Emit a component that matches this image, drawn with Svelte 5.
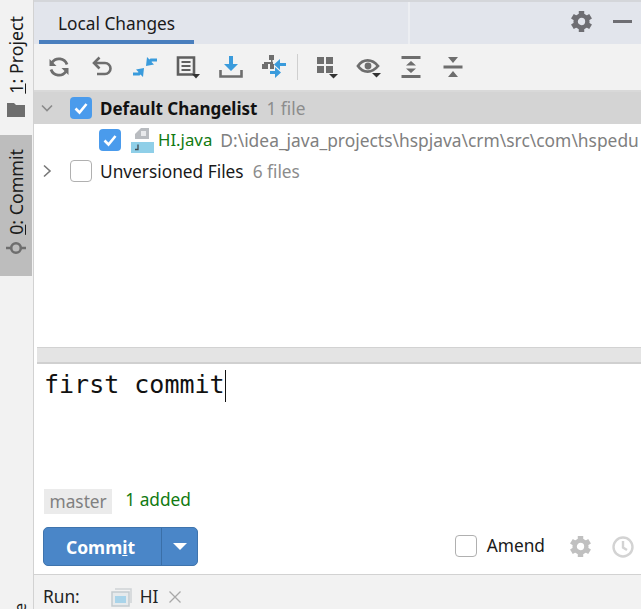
<script>
  const files = [{ name: 'Unversioned Files', count: '6 files' }];
  const teeth = [0, 60, 120, 180, 240, 300];
</script>

{#snippet gear(size, color)}
  <svg width={size} height={size} viewBox="0 0 20 20">
    <circle cx="10" cy="10" r="5.600" fill="none" stroke={color} stroke-width="4.200"/>
    {#each teeth as t}
      <path fill={color} d="M7.400 0h5.200v4H7.400z" transform="rotate({t} 10 10)"/>
    {/each}
  </svg>
{/snippet}

{#snippet check(on, size)}
  <span class="check" class:on style="width:{size}px;height:{size}px">
    {#if on}
      <svg viewBox="0 0 22 22" width={size} height={size}><path d="M5.500 11.500l4 4 7-8.500" fill="none" stroke="#fff" stroke-width="2.600"/></svg>
    {/if}
  </span>
{/snippet}

<div class="window">
  <aside class="stripe">
    <div class="side-tab project">
      <span class="side-label"><u>1</u>: Project</span>
      <svg width="18" height="14" viewBox="0 0 18 14"><path fill="#6e6e6e" d="M0 0h7l2 2h9v12H0z"/></svg>
    </div>
    <div class="side-tab commit">
      <span class="side-label"><u>0</u>: Commit</span>
      <svg width="20" height="14" viewBox="0 0 20 14">
        <path d="M0 7h20" stroke="#6e6e6e" stroke-width="2.500"/>
        <circle cx="10" cy="7" r="4.800" fill="#bdbdbd" stroke="#6e6e6e" stroke-width="2.600"/>
      </svg>
    </div>
    <span class="cut-label">e</span>
  </aside>

  <main class="main">
    <header class="tabs">
      <div class="tab">Local Changes</div>
      <span class="tab-line"></span>
      <div class="tab-actions">
        {@render gear(21, '#6e6e73')}
        <span class="minimize"></span>
      </div>
    </header>

    <div class="toolbar">
      <span class="cell">
        <svg width="24" height="24" viewBox="0 0 24 24" fill="none" stroke="#6e6e6e" stroke-width="2.800">
          <path d="M20 9.500A8.500 8.500 0 0 0 5 7.500"/><path d="M4 14.500A8.500 8.500 0 0 0 19 16.500"/>
          <path d="M2.500 4v7h7z" fill="#6e6e6e" stroke="none"/><path d="M21.500 20v-7h-7z" fill="#6e6e6e" stroke="none"/>
        </svg>
      </span>
      <span class="cell">
        <svg width="24" height="24" viewBox="0 0 24 24" fill="none" stroke="#6e6e6e" stroke-width="2.600">
          <path d="M4 8h11a5.500 5.500 0 0 1 0 11H7"/><path d="M9.500 2.500L4 8l5.500 5.500"/>
        </svg>
      </span>
      <span class="cell">
        <svg width="24" height="24" viewBox="0 0 24 24">
          <path fill="#3a9bdc" d="M13 11l1-9 2.500 2.500 1-1H24v3h-5l-.5.500 2.500 2.500z"/>
          <path fill="#3a9bdc" d="M11 13l-1 9-2.500-2.500-1 1H0v-3h5l.5-.5L3 14.500z"/>
        </svg>
      </span>
      <span class="cell">
        <svg width="26" height="26" viewBox="0 0 26 26" fill="none" stroke="#5f5f5f">
          <path stroke-width="2.600" d="M3 3.500h16v17H3z"/>
          <path stroke-width="2" d="M6.500 8h9M6.500 12h9M6.500 16h9"/>
          <path fill="#333" stroke="none" d="M17 20h8l-4 4.500z"/>
        </svg>
      </span>
      <span class="cell">
        <svg width="24" height="24" viewBox="0 0 24 24">
          <path fill="#3a9bdc" d="M10 1h4v8h5l-7 7-7-7h5z"/>
          <path fill="none" stroke="#6e6e6e" stroke-width="2.600" d="M1.500 15v6.500h21V15"/>
        </svg>
      </span>
      <span class="cell">
        <svg width="26" height="26" viewBox="0 0 26 26">
          <path fill="#6e6e6e" d="M8 1h5v5H8zM1 10h6v5H1zM9 10h4v5H9zM10 6h1.500v4H10zM3 8h9v2H3z"/>
          <path fill="#3a9bdc" d="M19 5v4h6v3h-6v4l-6-5.500zM14 13v4H9v3h5v4l6-5.500z"/>
        </svg>
      </span>
      <span class="tool-sep"></span>
      <span class="cell narrow">
        <svg width="26" height="26" viewBox="0 0 26 26">
          <path fill="#6e6e6e" d="M3 3h7v7H3zM12 3h7v7h-7zM3 12h7v7H3zM12 12h7v7h-7z"/>
          <path fill="#333" d="M15 20h9l-4.500 4.500z"/>
        </svg>
      </span>
      <span class="cell narrow">
        <svg width="26" height="26" viewBox="0 0 26 26">
          <path fill="none" stroke="#6e6e6e" stroke-width="2.800" d="M2 12c5-7.500 14-7.500 20 0-6 7.500-15 7.500-20 0z"/>
          <circle cx="12" cy="12" r="3.400" fill="#6e6e6e"/>
          <path fill="#333" d="M16 19h9l-4.500 4.500z"/>
        </svg>
      </span>
      <span class="cell narrow">
        <svg width="22" height="24" viewBox="0 0 22 24">
          <path fill="#6e6e6e" d="M1.500 1h19v3h-19zM1.500 20h19v3h-19zM11 6l5 4.500H6zM11 18l-5-4.500h10z"/>
        </svg>
      </span>
      <span class="cell narrow">
        <svg width="22" height="24" viewBox="0 0 22 24">
          <path fill="#6e6e6e" d="M1.500 10.500h19v3h-19zM6 2h10l-5 6zM11 16l5 6H6z"/>
        </svg>
      </span>
    </div>

    <section class="tree">
      <div class="row selected">
        <svg class="chevron" width="12" height="12" viewBox="0 0 12 12"><path d="M1 3.500l5 5 5-5" fill="none" stroke="#8a8a8a" stroke-width="1.600"/></svg>
        {@render check(true, 22)}
        <span class="name bold">Default Changelist</span>
        <span class="muted">1 file</span>
      </div>
      <div class="row file">
        {@render check(true, 22)}
        <svg class="file-icon" width="24" height="26" viewBox="0 0 24 26">
          <path fill="#b9bcc0" d="M5 12V7l6-6h8v11z"/>
          <path fill="#e9eaec" d="M11 4h5v5h-5z"/>
          <path fill="#8fcfe8" d="M1 15h23v11H1z"/>
          <path fill="none" stroke="#3f4a50" stroke-width="1.300" d="M8 17.500v5H5"/>
        </svg>
        <span class="name file-name">HI.java</span>
        <span class="path">D:\idea_java_projects\hspjava\crm\src\com\hspedu</span>
      </div>
      {#each files as f}
        <div class="row">
          <svg class="chevron" width="12" height="14" viewBox="0 0 12 14"><path d="M3 1.500l6 5.500-6 5.500" fill="none" stroke="#777" stroke-width="1.600"/></svg>
          {@render check(false, 22)}
          <span class="name">{f.name}</span>
          <span class="muted">{f.count}</span>
        </div>
      {/each}
    </section>

    <div class="splitter"></div>

    <section class="message">
      <div class="message-text">first commit<span class="caret"></span></div>
    </section>

    <div class="status">
      <span class="branch">master</span>
      <span class="added">1 added</span>
    </div>

    <div class="actions">
      <div class="commit-btn">
        <span class="commit-main">Comm<u>i</u>t</span>
        <span class="commit-drop"><i></i></span>
      </div>
      <div class="amend">
        {@render check(false, 22)}
        <span>Amend</span>
      </div>
      {@render gear(21, '#c0c0c0')}
      <svg class="clock" width="22" height="22" viewBox="0 0 22 22" fill="none" stroke="#d3d3d3" stroke-width="2.400">
        <circle cx="11" cy="11" r="9.500"/><path d="M11 5v6.500l4 2.500"/>
      </svg>
    </div>

    <footer class="run">
      <span class="run-label">Run:</span>
      <svg width="22" height="22" viewBox="0 0 22 22">
        <path fill="none" stroke="#cfd3d6" stroke-width="1.500" d="M4 3h16v14"/>
        <path fill="#e6eaec" stroke="#c4cbcf" stroke-width="1.500" d="M1 6h17v14H1z"/>
        <path fill="#a9d4ea" d="M4 10h11v7H4z"/>
      </svg>
      <span class="run-name">HI</span>
      <svg width="14" height="14" viewBox="0 0 14 14"><path d="M1.500 1.500l11 11M12.500 1.500l-11 11" stroke="#a8a8a8" stroke-width="1.300"/></svg>
    </footer>
  </main>
</div>

<style>
  :global(body) {
    margin: 0;
    overflow: hidden;
    background: #fff;
  }

  .window {
    width: 641px;
    height: 609px;
    display: flex;
    overflow: hidden;
    font-family: "Noto Sans", "Open Sans", sans-serif;
    font-size: 17.300px;
    color: #1a1a1a;
  }

  .stripe {
    width: 34px;
    flex: none;
    box-sizing: border-box;
    background: #f2f2f2;
    border-right: 1px solid #d2d2d2;
    display: flex;
    flex-direction: column;
    position: relative;
  }

  .side-tab {
    display: flex;
    flex-direction: column;
    align-items: center;
    justify-content: flex-end;
    width: 32px;
    box-sizing: border-box;
  }

  .side-tab.project {
    height: 135px;
    padding-bottom: 18px;
    gap: 9px;
  }

  .side-tab.commit {
    height: 141px;
    background: #bdbdbd;
    padding-bottom: 21px;
    gap: 6px;
  }

  .side-label {
    writing-mode: vertical-rl;
    transform: rotate(180deg);
    line-height: 32px;
    white-space: nowrap;
    font-size: 17.800px;
  }

  .cut-label {
    position: absolute;
    left: 9px;
    bottom: -3px;
    font-size: 16px;
    writing-mode: vertical-rl;
    transform: rotate(180deg);
  }

  .main {
    flex: 1;
    min-width: 0;
    display: flex;
    flex-direction: column;
  }

  .tabs {
    height: 44px;
    flex: none;
    background: #e2e5ec;
    border-top: 2px solid #d4d6da;
    box-sizing: border-box;
    display: flex;
    position: relative;
    justify-content: space-between;
  }

  .tab-line {
    position: absolute;
    left: 374px;
    top: 0;
    bottom: 0;
    width: 2px;
    background: #eceef2;
  }

  .tab {
    margin-left: 5px;
    width: 155px;
    box-sizing: border-box;
    padding: 9px 0 0 19px;
    line-height: 26px;
    border-bottom: 4px solid #4a7fbe;
    height: 42px;
  }

  .tab-actions {
    display: flex;
    align-items: center;
    gap: 21px;
    padding: 0 9px 4px 0;
  }

  .minimize {
    width: 19px;
    height: 3px;
    background: #6e6e73;
  }

  .toolbar {
    height: 48px;
    flex: none;
    background: #f2f2f2;
    border-bottom: 2px solid #d9d9d9;
    box-sizing: border-box;
    display: flex;
    align-items: center;
    padding-left: 3px;
  }

  .cell {
    width: 43px;
    display: flex;
    justify-content: center;
  }

  .cell.narrow {
    width: 42px;
  }

  .tool-sep {
    width: 1px;
    height: 26px;
    background: #cfcfcf;
    margin: 0 8px 0 2px;
  }

  .tree {
    flex: 1;
    min-height: 0;
  }

  .row {
    height: 31.500px;
    display: flex;
    align-items: center;
    white-space: nowrap;
    padding-left: 7px;
  }

  .row.selected {
    background: #d4d4d4;
    height: 32px;
  }

  .row.file {
    padding-left: 65px;
  }

  .chevron {
    margin-right: 17px;
  }

  .check {
    box-sizing: border-box;
    flex: none;
    border-radius: 4px;
    background: #fff;
    border: 1.500px solid #b0b0b0;
    margin-right: 8px;
    display: block;
  }

  .check.on {
    background: #4a9bec;
    border: none;
  }

  .check svg {
    display: block;
  }

  .file-icon {
    margin: 0 4px 0 1px;
  }

  .name {
    margin-right: 9px;
  }

  .bold {
    font-weight: 700;
    font-size: 17px;
    color: #111;
  }

  .file-name {
    color: #117a11;
    font-size: 16.800px;
    margin-right: 8px;
  }

  .muted {
    color: #8c8c8c;
  }

  .path {
    color: #808080;
    font-size: 17.400px;
  }

  .splitter {
    height: 17px;
    flex: none;
    box-sizing: border-box;
    background: #e4e4e4;
    border-top: 1px solid #d2d2d2;
    border-bottom: 2px solid #d0d0d0;
    margin-left: 3px;
  }

  .message {
    height: 120px;
    flex: none;
    padding: 6px 0 0 10px;
    box-sizing: border-box;
  }

  .message-text {
    font-family: "DejaVu Sans Mono", monospace;
    font-size: 25px;
    line-height: 30px;
    color: #111;
    display: flex;
    align-items: flex-start;
  }

  .caret {
    width: 1.500px;
    height: 32px;
    background: #111;
  }

  .status {
    height: 43px;
    flex: none;
    display: flex;
    align-items: center;
    padding: 0 0 11px 10px;
    box-sizing: border-box;
    gap: 13px;
  }

  .branch {
    background: #ebebeb;
    color: #808080;
    padding: 0 5.500px;
    line-height: 25px;
    height: 25px;
    margin-top: 2px;
  }

  .added {
    color: #117a11;
    margin-bottom: 2px;
  }

  .actions {
    height: 48px;
    flex: none;
    display: flex;
    align-items: flex-start;
    padding: 0 7px 0 9px;
    box-sizing: border-box;
    border-bottom: 1px solid #d2d2d2;
  }

  .actions > :global(svg) {
    margin-top: 9px;
  }

  .commit-btn {
    width: 155px;
    height: 39px;
    background: #4a86c8;
    border: 1px solid #3f74ad;
    box-sizing: border-box;
    border-radius: 5px;
    display: flex;
    color: #fff;
    font-weight: 700;
    font-size: 17.500px;
    margin-right: auto;
  }

  .commit-main {
    flex: 1;
    text-align: center;
    line-height: 38px;
    padding-right: 4px;
    border-right: 1px solid #3a6fa8;
  }

  .commit-drop {
    width: 35px;
    display: flex;
    align-items: center;
    justify-content: center;
  }

  .commit-drop i {
    border-left: 7px solid transparent;
    border-right: 7px solid transparent;
    border-top: 7px solid #fff;
  }

  .amend {
    display: flex;
    align-items: center;
    margin: 7px 25px 0 0;
  }

  .amend .check {
    margin-right: 10px;
  }

  .clock {
    margin-left: 21px;
  }

  .run {
    flex: none;
    height: 34px;
    background: #f2f2f2;
    display: flex;
    align-items: center;
    padding: 9px 0 0 9px;
    box-sizing: border-box;
    color: #222;
    overflow: hidden;
  }

  .run-label {
    margin-right: 31px;
  }

  .run-name {
    margin: 0 10px 0 7px;
  }
</style>
